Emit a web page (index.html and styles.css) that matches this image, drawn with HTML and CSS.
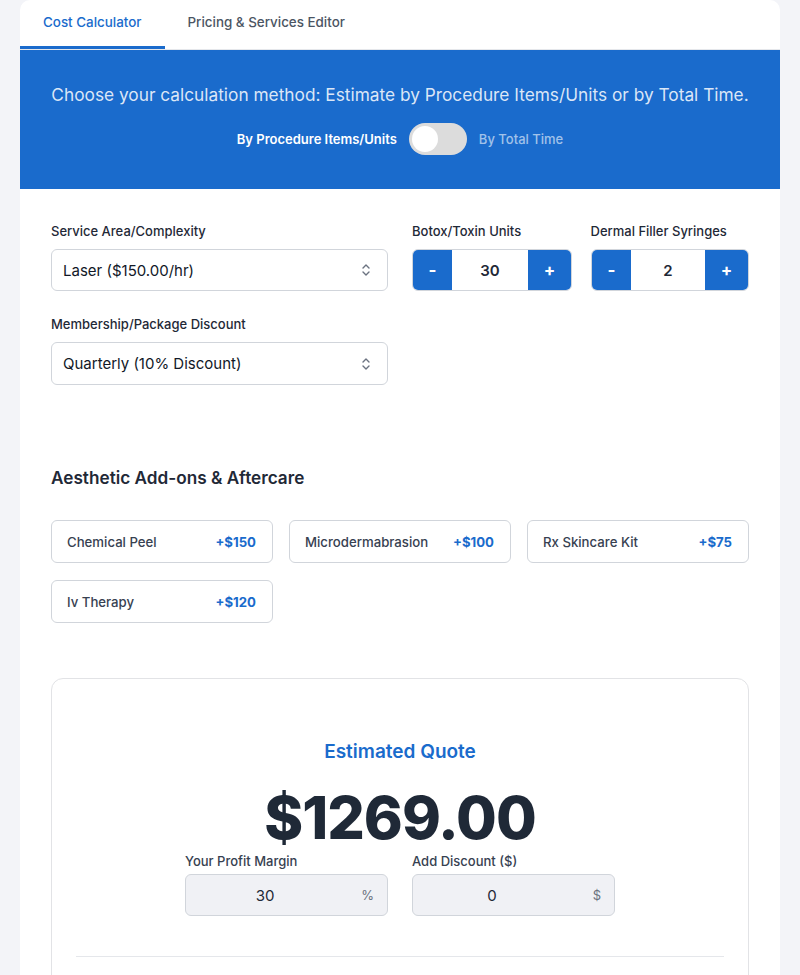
FILE: index.html
```html
<!DOCTYPE html>
<html lang="en">
<head>
<meta charset="utf-8">
<title>Cost Calculator</title>
<link rel="stylesheet" href="styles.css">
</head>
<body>
<div class="app">
  <nav class="tabs">
    <div class="tab active">Cost Calculator</div>
    <div class="tab">Pricing &amp; Services Editor</div>
  </nav>
  <section class="banner">
    <p class="banner-text">Choose your calculation method: Estimate by Procedure Items/Units or by Total Time.</p>
    <div class="mode">
      <span class="mode-label on">By Procedure Items/Units</span>
      <span class="switch"><span class="knob"></span></span>
      <span class="mode-label off">By Total Time</span>
    </div>
  </section>
  <main class="content">
    <div class="form-grid">
      <div class="field span2">
        <label class="label">Service Area/Complexity</label>
        <div class="select"><span>Laser ($150.00/hr)</span>
          <svg width="12" height="14" viewBox="0 0 12 14" fill="none" stroke="#6b7280" stroke-width="1.4" stroke-linecap="round" stroke-linejoin="round"><path d="M3 5l3-3 3 3M3 9l3 3 3-3"/></svg>
        </div>
      </div>
      <div class="field">
        <label class="label">Botox/Toxin Units</label>
        <div class="stepper"><span class="btn minus">-</span><span class="val">30</span><span class="btn plus">+</span></div>
      </div>
      <div class="field end">
        <label class="label">Dermal Filler Syringes</label>
        <div class="stepper narrow"><span class="btn minus">-</span><span class="val">2</span><span class="btn plus">+</span></div>
      </div>
      <div class="field span2">
        <label class="label">Membership/Package Discount</label>
        <div class="select tall"><span>Quarterly (10% Discount)</span>
          <svg width="12" height="14" viewBox="0 0 12 14" fill="none" stroke="#6b7280" stroke-width="1.4" stroke-linecap="round" stroke-linejoin="round"><path d="M3 5l3-3 3 3M3 9l3 3 3-3"/></svg>
        </div>
      </div>
    </div>

    <h2 class="section-title">Aesthetic Add-ons &amp; Aftercare</h2>
    <div class="addons">
      <div class="addon"><span class="addon-name">Chemical Peel</span><span class="addon-price">+$150</span></div>
      <div class="addon"><span class="addon-name">Microdermabrasion</span><span class="addon-price">+$100</span></div>
      <div class="addon"><span class="addon-name">Rx Skincare Kit</span><span class="addon-price">+$75</span></div>
      <div class="addon"><span class="addon-name">Iv Therapy</span><span class="addon-price">+$120</span></div>
    </div>

    <section class="quote">
      <h3 class="quote-title">Estimated Quote</h3>
      <div class="quote-total">$1269.00</div>
      <div class="adjust">
        <div class="adj-field">
          <label class="adj-label">Your Profit Margin</label>
          <div class="adj-input"><span class="adj-val">30</span><span class="adj-suffix">%</span></div>
        </div>
        <div class="adj-field">
          <label class="adj-label">Add Discount ($)</label>
          <div class="adj-input"><span class="adj-val">0</span><span class="adj-suffix">$</span></div>
        </div>
      </div>
      <hr class="divider">
    </section>
  </main>
</div>
</body>
</html>
```

FILE: styles.css
```css
* { box-sizing: border-box; }
html, body { margin: 0; padding: 0; }
body {
  background: #f3f4f8;
  font-family: Inter, "Noto Sans", sans-serif;
  color: #1f2937;
}
.app {
  width: 760px;
  margin: 0 20px;
  background: #ffffff;
  border-radius: 10px 10px 0 0;
  overflow: hidden;
  min-height: 1100px;
}
.tabs {
  display: flex;
  height: 50px;
  border-bottom: 1px solid #e5e7eb;
}
.tab {
  padding: 0 23px 2px;
  display: flex;
  align-items: center;
  font-size: 13.4px;
  font-weight: 500;
  color: #4b5563;
  border-bottom: 3px solid transparent;
}
.tab.active {
  color: #1a6bcc;
  border-bottom-color: #1a6bcc;
}
.banner {
  background: #1a6bcc;
  padding: 32px 24px 34px;
  text-align: center;
}
.banner-text {
  margin: 0 0 15px;
  font-size: 17.3px;
  line-height: 26px;
  color: rgba(255, 255, 255, 0.85);
}
.mode {
  display: flex;
  justify-content: center;
  align-items: center;
  gap: 12px;
}
.mode-label {
  font-size: 13px;
  font-weight: 600;
}
.mode-label.on { color: #ffffff; }
.mode-label.off { color: rgba(255, 255, 255, 0.6); font-weight: 500; }
.switch {
  width: 58px;
  height: 32px;
  border-radius: 16px;
  background: #dcdcdc;
  padding: 3px;
  display: flex;
}
.knob {
  width: 26px;
  height: 26px;
  border-radius: 50%;
  background: #ffffff;
}
.content {
  padding: 33px 31px 40px;
}
.form-grid {
  display: grid;
  grid-template-columns: repeat(4, minmax(0, 1fr));
  column-gap: 24px;
  row-gap: 24px;
}
.field { display: flex; flex-direction: column; }
.field.span2 { grid-column: span 2; }
.field.span2:last-child { grid-column: 1 / span 2; }
.field.end { align-items: flex-end; }
.field.end .label { align-self: flex-start; margin-left: -2px; }
.label {
  font-size: 13px;
  font-weight: 500;
  line-height: 18px;
  margin-bottom: 9px;
  color: #1f2937;
  white-space: nowrap;
}
.select {
  height: 42px;
  border: 1px solid #d1d5db;
  border-radius: 6px;
  display: flex;
  align-items: center;
  justify-content: space-between;
  padding: 0 15px 0 11px;
  font-size: 15px;
  color: #111827;
}
.select.tall { height: 43px; }
.stepper {
  width: 160px;
  height: 42px;
  border: 1px solid #d1d5db;
  border-radius: 6px;
  overflow: hidden;
  display: flex;
  flex-shrink: 0;
}
.stepper.narrow { width: 158px; }
.btn {
  background: #1a6bcc;
  color: #ffffff;
  font-size: 17px;
  font-weight: 700;
  display: flex;
  align-items: center;
  justify-content: center;
}
.btn.minus { width: 39px; }
.btn.plus { width: 43px; }
.val {
  flex: 1;
  display: flex;
  align-items: center;
  justify-content: center;
  font-size: 15px;
  font-weight: 600;
  color: #1f2937;
}
.section-title {
  margin: 81px 0 30px;
  font-size: 17.2px;
  line-height: 24px;
  font-weight: 600;
  color: #1f2937;
}
.addons {
  display: grid;
  grid-template-columns: repeat(3, minmax(0, 1fr));
  gap: 17px 16px;
}
.addon {
  height: 43px;
  border: 1px solid #d1d5db;
  border-radius: 6px;
  padding: 0 16px 0 15px;
  display: flex;
  align-items: center;
  justify-content: space-between;
  font-size: 13.2px;
}
.addon-name { color: #374151; font-weight: 500; }
.addon-price { color: #1a6bcc; font-weight: 700; }
.quote {
  margin-top: 55px;
  border: 1px solid #e2e3e6;
  border-radius: 12px;
  padding: 60px 24px 30px;
  text-align: center;
}
.quote-title {
  margin: 0;
  font-size: 19px;
  line-height: 26px;
  font-weight: 600;
  color: #1a6bcc;
}
.quote-total {
  margin-top: 25px;
  font-size: 59px;
  line-height: 56px;
  margin-bottom: 6px;
  font-weight: 800;
  letter-spacing: -1px;
  color: #1f2937;
}
.adjust {
  display: flex;
  justify-content: center;
  gap: 24px;
}
.adj-field {
  width: 203px;
  display: flex;
  flex-direction: column;
  text-align: left;
}
.adj-label {
  font-size: 13px;
  font-weight: 500;
  line-height: 18px;
  color: #374151;
  margin-bottom: 4px;
}
.adj-input {
  height: 42px;
  background: #f0f1f5;
  border: 1px solid #d1d5db;
  border-radius: 6px;
  display: flex;
  align-items: center;
}
.adj-val {
  flex: 1;
  text-align: center;
  font-size: 15px;
  color: #1f2937;
}
.adj-suffix {
  width: 43px;
  padding-right: 13px;
  text-align: right;
  font-size: 13px;
  color: #6b7280;
}
.divider {
  margin: 40px 0 20px;
  border: 0;
  border-top: 1px solid #e5e7eb;
}
```
